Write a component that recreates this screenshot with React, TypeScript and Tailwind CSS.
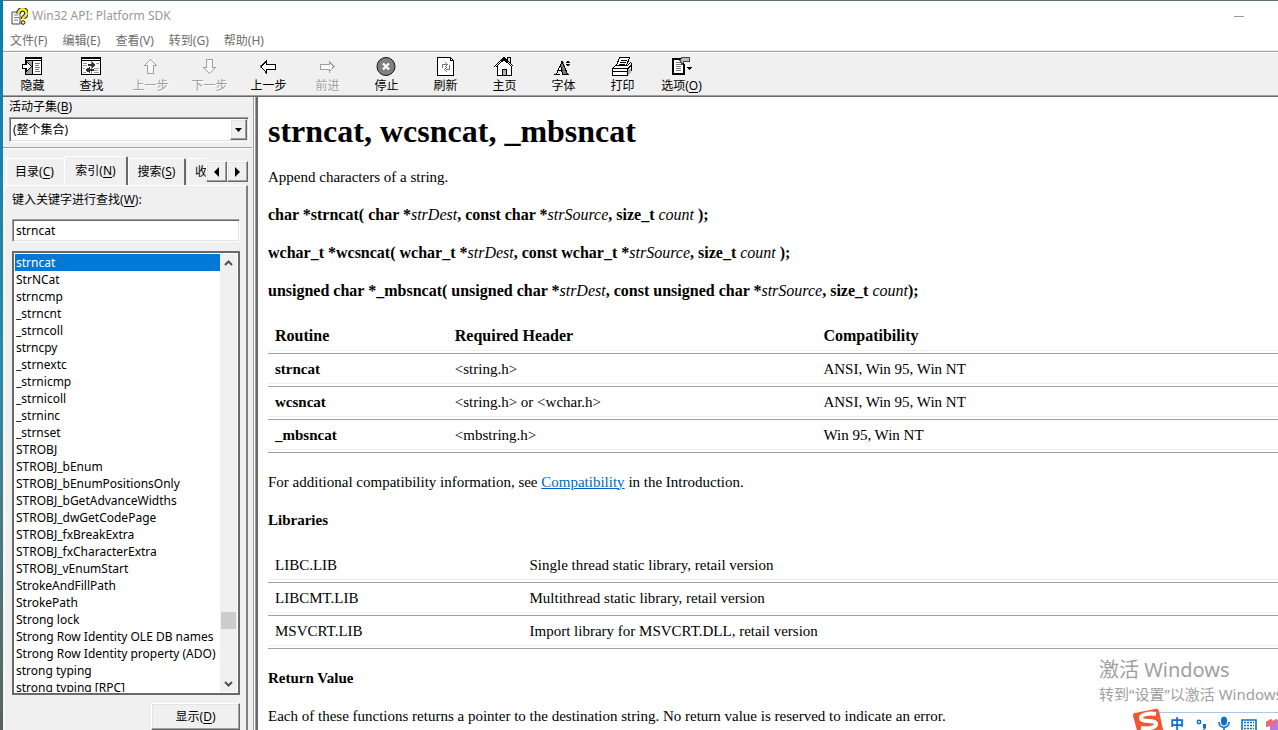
import { useState } from 'react';
import type { ReactNode } from 'react';

const keywords = [
  'strncat', 'StrNCat', 'strncmp', '_strncnt', '_strncoll', 'strncpy', '_strnextc', '_strnicmp',
  '_strnicoll', '_strninc', '_strnset', 'STROBJ', 'STROBJ_bEnum', 'STROBJ_bEnumPositionsOnly',
  'STROBJ_bGetAdvanceWidths', 'STROBJ_dwGetCodePage', 'STROBJ_fxBreakExtra',
  'STROBJ_fxCharacterExtra', 'STROBJ_vEnumStart', 'StrokeAndFillPath', 'StrokePath', 'Strong lock',
  'Strong Row Identity OLE DB names', 'Strong Row Identity property (ADO)', 'strong typing',
  'strong typing [RPC]',
];

const routines = [
  ['strncat', '<string.h>', 'ANSI, Win 95, Win NT'],
  ['wcsncat', '<string.h> or <wchar.h>', 'ANSI, Win 95, Win NT'],
  ['_mbsncat', '<mbstring.h>', 'Win 95, Win NT'],
];

const libraries = [
  ['LIBC.LIB', 'Single thread static library, retail version'],
  ['LIBCMT.LIB', 'Multithread static library, retail version'],
  ['MSVCRT.LIB', 'Import library for MSVCRT.DLL, retail version'],
];

const menus = [['文件', 'F'], ['编辑', 'E'], ['查看', 'V'], ['转到', 'G'], ['帮助', 'H']];

const raised = 'border border-t-white border-l-white border-r-[#696969] border-b-[#696969] shadow-[inset_-1px_-1px_#a0a0a0,inset_1px_1px_#e3e3e3] bg-[#f0f0f0]';
const sunken = 'border border-t-[#a0a0a0] border-l-[#a0a0a0] border-r-white border-b-white shadow-[inset_1px_1px_#696969,inset_-1px_-1px_#e3e3e3] bg-white';

function Icon({ children }: { children: ReactNode }) {
  return (
    <svg width="21" height="20" viewBox="0 0 21 20" fill="none" stroke="currentColor" shapeRendering="crispEdges" aria-hidden="true">
      {children}
    </svg>
  );
}

const arrow = 'M3 10.5l5-5v3h9v5H8v3z';

const icons: Record<string, ReactNode> = {
  hide: (
    <Icon>
      <rect x="3.5" y="1.5" width="16" height="17" fill="#fff" />
      <path d="M4 4h6v14H4z" fill="#a0a0a0" stroke="none" />
      <path d="M3 2.5h17M3 4.5h17M10.5 4v15M3 18.5h17" />
      <path d="M13 7.5h5M13 9.5h4M13 11.5h5M13 13.5h4M13 15.5h5" stroke="#777" />
      <path d="M.5 8.5h4v-3l5 5-5 5v-3h-4z" fill="#fff" />
    </Icon>
  ),
  locate: (
    <Icon>
      <rect x=".5" y="1.5" width="19" height="17" fill="#fff" />
      <path d="M0 2.5h20M0 4.5h20" />
      <path d="M10.5 5v13" stroke="#888" />
      <path d="M2 7.5h4M2 9.5h4M13 12.5h5M13 14.5h4M13 16.5h5M2 12.5h2M2 16.5h3M15 7.5h3" stroke="#999" />
      <path d="M7 8h4V5.500l4 3.500-4 3.500V10H7zM13 13H9v-2.500L4 14l5 3.500V15h4z" fill="#333" stroke="none" />
    </Icon>
  ),
  up: <Icon><path d="M10.500 3.500l-6 6h3v8h6v-8h3z" fill="#f8f8f8" /></Icon>,
  down: <Icon><path d="M10.500 17.500l-6-6h3v-8h6v8h3z" fill="#f8f8f8" /></Icon>,
  back: <Icon><path d={arrow} fill="#fff" /><path d="M2 9h1v3H2z" fill="#2a2" stroke="none" /></Icon>,
  forward: <Icon><path d={arrow} transform="translate(20 0) scale(-1 1)" fill="#f8f8f8" /></Icon>,
  stop: (
    <svg width="21" height="20" viewBox="0 0 21 20" aria-hidden="true">
      <circle cx="10" cy="10.500" r="9" fill="#808080" stroke="#111" />
      <path d="M7 7.500l6 6m0-6l-6 6" stroke="#fff" strokeWidth="2.400" />
    </svg>
  ),
  refresh: (
    <Icon>
      <path d="M2.500 1.500h13l3 3v15h-16z" fill="#fff" />
      <path d="M15.500 1.500v3h3" />
      <path d="M7.500 12V8.500h4M10 6l2.500 2.500L10 11M14.500 9v4.500h-4M12 11l-2.500 2.500L12 16" stroke="#777" />
    </Icon>
  ),
  home: (
    <Icon>
      <path d="M13.500 5V1.500h3V8" fill="#ddd" />
      <path d="M3.500 10v9.500h14V10l-7-7z" fill="#fff" stroke="none" />
      <path d="M3.500 10v9.500h14V10M.5 10.500l9.500-9 9.500 9M2.500 10.500L10 3.500l7.500 7" />
      <path d="M8.500 19.500v-6h4v6z" fill="#b0b0b0" />
    </Icon>
  ),
  font: (
    <Icon>
      <path d="M9 5h1l5 13h-5l-1-3-2-5-3 8H3z" fill="#777" stroke="none" />
      <path d="M1 18.500h6M9 18.500h7M3.500 18L9 5.500 14.500 18M9.500 18L7.500 9M5 14.500h5" />
      <path d="M15 4l2.500 3h-5zM15 11l2.500-3h-5z" fill="currentColor" stroke="none" />
    </Icon>
  ),
  print: (
    <Icon>
      <path d="M4.500 9.500l3-8h10l-3 8" fill="#fff" />
      <path d="M9 4.500h6M8 6.500h6M7 8.500h6" />
      <path d="M.5 12.500l3-3h12l3-3 1 1v7l-4 5H.5z" fill="#fff" />
      <path d="M0 12.500h16M15.500 19v-6l4-4M0 15.500h15M0 19.500h15" />
      <path d="M16 13h3v3l-3 3z" fill="#aaa" stroke="none" />
    </Icon>
  ),
  options: (
    <Icon>
      <path d="M1.500 2.500h11v16h-11z" fill="#fff" />
      <path d="M1 2.500h8M2 2v17M1 18h12M12.500 8v11" strokeWidth="2" />
      <path d="M5 6.500h4M5 8.500h5M5 10.500h5M5 12.500h5M5 14.500h5" stroke="#777" />
      <path d="M9 4.500l2-3h7v4h-5l-2 3z" fill="#bbb" stroke="#444" />
      <path d="M16 11h5l-2.500 3z" fill="currentColor" stroke="none" />
    </Icon>
  ),
};

const tools = [
  { icon: 'hide', label: '隐藏' },
  { icon: 'locate', label: '查找' },
  { icon: 'up', label: '上一步', disabled: true },
  { icon: 'down', label: '下一步', disabled: true },
  { icon: 'back', label: '上一步' },
  { icon: 'forward', label: '前进', disabled: true },
  { icon: 'stop', label: '停止' },
  { icon: 'refresh', label: '刷新' },
  { icon: 'home', label: '主页' },
  { icon: 'font', label: '字体' },
  { icon: 'print', label: '打印' },
  { icon: 'options', label: '选项', hotkey: 'O' },
];

function Hotkey({ letter }: { letter: string }) {
  return <>(<span className="underline underline-offset-2">{letter}</span>)</>;
}

function TitleBar() {
  return (
    <header className="bg-white">
      <div className="flex h-[30px] items-center gap-1 pl-2 pr-[34px] text-[#999]">
        <svg width="17" height="17" viewBox="0 0 17 17" aria-hidden="true">
          <path d="M1 4h8v12H1z" fill="#fff" stroke="#444" />
          <path d="M3 7h4M3 9.500h5M3 12h4" stroke="#777" />
          <path d="M7.500 5.500c0-5.500 8-5.500 8 0 0 3-3.500 3-3.500 5.500" fill="none" stroke="#222" strokeWidth="4.500" />
          <path d="M7.500 5.500c0-5.500 8-5.500 8 0 0 3-3.500 3-3.500 5.500" fill="none" stroke="#f5ea20" strokeWidth="2.600" />
          <circle cx="12" cy="14.500" r="1.900" fill="#f5ea20" stroke="#222" />
        </svg>
        <h1 className="text-xs">Win32 API: Platform SDK</h1>
        <button aria-label="Minimize" className="ml-auto flex h-5 w-[10px] items-center">
          <span className="h-px w-full bg-[#999]"></span>
        </button>
      </div>
      <nav className="flex h-[19px] items-center gap-[15px] pl-[7px] text-xs text-[#6d6d6d]">
        {menus.map(([name, key]) => (
          <button key={key}>{name}({key})</button>
        ))}
      </nav>
    </header>
  );
}

function Toolbar() {
  return (
    <div className="h-[46px] shrink-0 border-b border-[#a0a0a0] bg-[#f0f0f0] pt-px">
      <div className="border-t border-[#a0a0a0]">
        <div className="flex border-t border-white pt-[3px]">
          {tools.map((tool) => (
            <button
              key={tool.icon}
              disabled={tool.disabled}
              className="flex w-[59px] flex-col items-center text-xs leading-5 disabled:text-[#a0a0a0] disabled:[text-shadow:1px_1px_#fff]"
            >
              {icons[tool.icon]}
              <span className="whitespace-nowrap">{tool.label}{tool.hotkey && <Hotkey letter={tool.hotkey} />}</span>
            </button>
          ))}
        </div>
      </div>
    </div>
  );
}

function Tabs() {
  const tab = 'flex shrink-0 items-center rounded-t-[2px] border-l border-t border-white';
  return (
    <div className="flex items-end pl-[3px] pr-1">
      <div role="tablist" className="flex h-[29px] w-[200px] items-end overflow-hidden">
        <button role="tab" className={`${tab} h-[27px] w-[58px] pl-2`}><span>目录<Hotkey letter="C" /></span></button>
        <button role="tab" aria-selected="true" className={`${tab} h-[29px] w-[64px] justify-center border-r-2 border-r-[#696969]`}><span>索引<Hotkey letter="N" /></span></button>
        <button role="tab" className={`${tab} h-[27px] w-[58px] justify-center border-r-2 border-r-[#696969]`}><span>搜索<Hotkey letter="S" /></span></button>
        <button role="tab" className={`${tab} ml-[2px] h-[27px] w-[62px] pl-[6px]`}>收</button>
      </div>
      <div className="mb-[3px] flex flex-1">
        <button aria-label="Scroll tabs left" className={`${raised} flex h-[21px] flex-1 items-center justify-center`}>
          <svg width="5" height="10" viewBox="0 0 5 10" aria-hidden="true"><path d="M5 0v10L0 5z" /></svg>
        </button>
        <button aria-label="Scroll tabs right" className={`${raised} flex h-[21px] flex-1 items-center justify-center`}>
          <svg width="5" height="10" viewBox="0 0 5 10" aria-hidden="true"><path d="M0 0v10l5-5z" /></svg>
        </button>
      </div>
    </div>
  );
}

function Chevron({ up = false }: { up?: boolean }) {
  return (
    <svg width="9" height="6" viewBox="0 0 9 6" fill="none" stroke="#505050" strokeWidth="2" aria-hidden="true">
      <path d={up ? 'M1 5l3.500-3.500L8 5' : 'M1 1l3.500 3.500L8 1'} />
    </svg>
  );
}

function Sidebar() {
  const [query, setQuery] = useState('strncat');
  const [selected, setSelected] = useState(0);

  return (
    <aside className="flex w-[249px] shrink-0 flex-col bg-[#f0f0f0] text-xs">
      <div className="border-b border-[#a0a0a0] pb-[5px] pl-[6px] pr-[3px]">
        <label htmlFor="subset" className="block h-5 leading-5">活动子集<Hotkey letter="B" /></label>
        <div className={`${sunken} relative flex h-[25px] p-px`}>
          <select id="subset" className="w-full appearance-none bg-white px-[2px] outline-none">
            <option>(整个集合)</option>
          </select>
          <span className={`${raised} pointer-events-none absolute inset-y-px right-px flex w-[17px] items-center justify-center`}>
            <svg width="7" height="4" viewBox="0 0 7 4" aria-hidden="true"><path d="M0 0h7L3.500 4z" /></svg>
          </span>
        </div>
      </div>

      <div className="flex min-h-0 flex-1 flex-col border-t border-white pt-[7px]">
        <Tabs />
        <div className="ml-px mr-1 flex min-h-0 flex-1 flex-col border-l border-t border-r-2 border-l-white border-t-white border-r-[#808080] pl-[7px] pr-[6px]">
          <label htmlFor="keyword" className="block pt-[5px] leading-[18px]">键入关键字进行查找<Hotkey letter="W" />:</label>
          <input
            id="keyword"
            value={query}
            onChange={(e) => setQuery(e.target.value)}
            className={`${sunken} mt-[10px] h-[23px] w-full shrink-0 px-[3px] outline-none`}
          />

          <div className="mt-[9px] flex h-[444px] shrink-0 border-2 border-[#696969] bg-white p-px">
            <ul className="min-w-0 flex-1 overflow-hidden">
              {keywords.map((word, i) => (
                <li key={word}>
                  <button
                    onClick={() => setSelected(i)}
                    className={`block h-[17px] w-full overflow-hidden whitespace-nowrap pl-px text-left leading-[17px] ${i === selected ? 'bg-[#0078d7] text-white' : ''}`}
                  >
                    {word}
                  </button>
                </li>
              ))}
            </ul>
            <div className="flex w-[17px] shrink-0 flex-col items-center bg-[#f0f0f0]">
              <button aria-label="Scroll up" className="flex h-[17px] w-full items-center justify-center"><Chevron up /></button>
              <div className="flex w-full flex-1 flex-col items-center justify-end pb-[46px]">
                <div className="h-[17px] w-[15px] bg-[#cdcdcd]"></div>
              </div>
              <button aria-label="Scroll down" className="flex h-[17px] w-full items-center justify-center"><Chevron /></button>
            </div>
          </div>

          <button className={`${raised} mt-2 h-[27px] w-[89px] shrink-0 self-end`}>显示<Hotkey letter="D" /></button>
        </div>
      </div>
    </aside>
  );
}

const row = 'h-[33px] border-b border-[#a0a0a0]';
const cell = 'px-[7px] text-left shadow-[inset_0_-2px_#fff,inset_0_-3px_#f0f0f0]';

function Article() {
  return (
    <main className="min-w-0 flex-1 overflow-hidden border-l-2 border-[#696969] bg-white pl-[10px] pt-4 font-['Liberation_Serif',serif] text-[15px] leading-[18px]">
      <h2 className="mb-[19px] text-[32px] font-bold leading-9">strncat, wcsncat, _mbsncat</h2>
      <p className="mb-5">Append characters of a string.</p>
      <p className="mb-5 text-base leading-[18px]">
        <b>char *strncat( char *</b><i>strDest</i><b>, const char *</b><i>strSource</i><b>, size_t</b> <i>count</i> <b>);</b>
      </p>
      <p className="mb-5 text-base leading-[18px]">
        <b>wchar_t *wcsncat( wchar_t *</b><i>strDest</i><b>, const wchar_t *</b><i>strSource</i><b>, size_t</b> <i>count</i> <b>);</b>
      </p>
      <p className="mb-5 text-base leading-[18px]">
        <b>unsigned char *_mbsncat( unsigned char *</b><i>strDest</i><b>, const unsigned char *</b><i>strSource</i><b>, size_t</b> <i>count</i><b>);</b>
      </p>

      <table className="mb-5 w-full table-fixed border-collapse">
        <thead>
          <tr className={`${row} text-base leading-[18px]`}>
            <th className={`${cell} w-[17.8%]`}>Routine</th>
            <th className={`${cell} w-[36.5%]`}>Required Header</th>
            <th className={cell}>Compatibility</th>
          </tr>
        </thead>
        <tbody>
          {routines.map(([name, include, compat]) => (
            <tr key={name} className={row}>
              <td className={`${cell} pb-[2px] font-bold`}>{name}</td>
              <td className={`${cell} pb-[2px]`}>{include}</td>
              <td className={`${cell} pb-[2px]`}>{compat}</td>
            </tr>
          ))}
        </tbody>
      </table>

      <p className="mb-5">
        For additional compatibility information, see <a href="#compatibility" className="text-[#0066cc] underline">Compatibility</a> in the Introduction.
      </p>
      <h3 className="mb-[21px] font-bold">Libraries</h3>
      <table className="mb-5 w-full table-fixed border-collapse">
        <tbody>
          {libraries.map(([name, description]) => (
            <tr key={name} className={row}>
              <td className={`${cell} w-[25.2%] pb-[2px]`}>{name}</td>
              <td className={`${cell} pb-[2px]`}>{description}</td>
            </tr>
          ))}
        </tbody>
      </table>
      <h3 className="mb-5 font-bold">Return Value</h3>
      <p>Each of these functions returns a pointer to the destination string. No return value is reserved to indicate an error.</p>
    </main>
  );
}

function DesktopOverlay() {
  return (
    <>
      <div className="pointer-events-none absolute bottom-[26px] right-0 w-[179px] overflow-hidden whitespace-nowrap text-[#a0a0a0]">
        <div className="text-xl leading-7">激活 Windows</div>
        <div className="text-[15px] leading-5">转到“设置”以激活 Windows</div>
      </div>
      <div className="absolute bottom-0 right-0 flex h-[22px] w-[146px] items-end overflow-hidden">
        <svg width="32" height="22" viewBox="0 0 32 22" className="relative z-10 shrink-0" aria-hidden="true">
          <path d="M3 5Q1 5 1 8l5 18h26L27 3q-1-3-4-2z" fill="#f4572c" />
          <path d="M24 6c-7-1-15 0-15 4 0 5 15 1 15 6 0 4-8 5-15 4" fill="none" stroke="#fff" strokeWidth="4" />
        </svg>
        <div className="-ml-3 flex h-[18px] flex-1 shrink-0 items-center border-t border-[#a9c9e2] bg-white pl-[18px] text-[#0a6fd0]">
          <button className="mt-1 w-[14px] text-sm font-bold leading-4">中</button>
          <svg width="94" height="17" viewBox="0 0 94 17" className="ml-[11px] shrink-0" fill="none" stroke="currentColor" aria-hidden="true">
            <circle cx="4" cy="9" r="1.700" strokeWidth="1.500" />
            <path d="M8 11h3v4l-2 2H8l1-2H8z" fill="currentColor" stroke="none" />
            <rect x="26.500" y="4" width="5" height="8" rx="2.500" fill="currentColor" />
            <path d="M24 9c0 7 10 7 10 0M29 14v3" strokeWidth="1.600" />
            <path d="M47 7h14v11H47z" strokeWidth="1.600" />
            <path d="M49 9.500h10M49 12.500h10M49 15.500h10" strokeWidth="1.600" strokeDasharray="2 1" />
            <path d="M71 9l5-3 2 2 3-2 8 5-4 4-2-2v6h-8v-6l-4 1z" fill="#b678e8" stroke="none" />
            <path d="M71 9l5-3 2 2 3-2v5l-10 3z" fill="#ec6a70" stroke="none" />
          </svg>
        </div>
      </div>
    </>
  );
}

export default function App() {
  return (
    <div className="relative flex h-screen overflow-hidden bg-white font-['Noto_Sans','Noto_Sans_CJK_SC',sans-serif] text-black">
      <div className="w-[3px] shrink-0 bg-linear-to-b from-[#087ca8] via-[#2b88ad] to-[#59655a]"></div>
      <div className="flex min-w-0 flex-1 flex-col border-t border-[#64737b]">
        <TitleBar />
        <Toolbar />
        <div className="flex min-h-0 flex-1 border-t border-[#696969] bg-[#f0f0f0]">
          <Sidebar />
          <div className="ml-px w-[3px] shrink-0 border-l border-r border-[#a0a0a0] bg-white"></div>
          <Article />
        </div>
      </div>
      <DesktopOverlay />
    </div>
  );
}
